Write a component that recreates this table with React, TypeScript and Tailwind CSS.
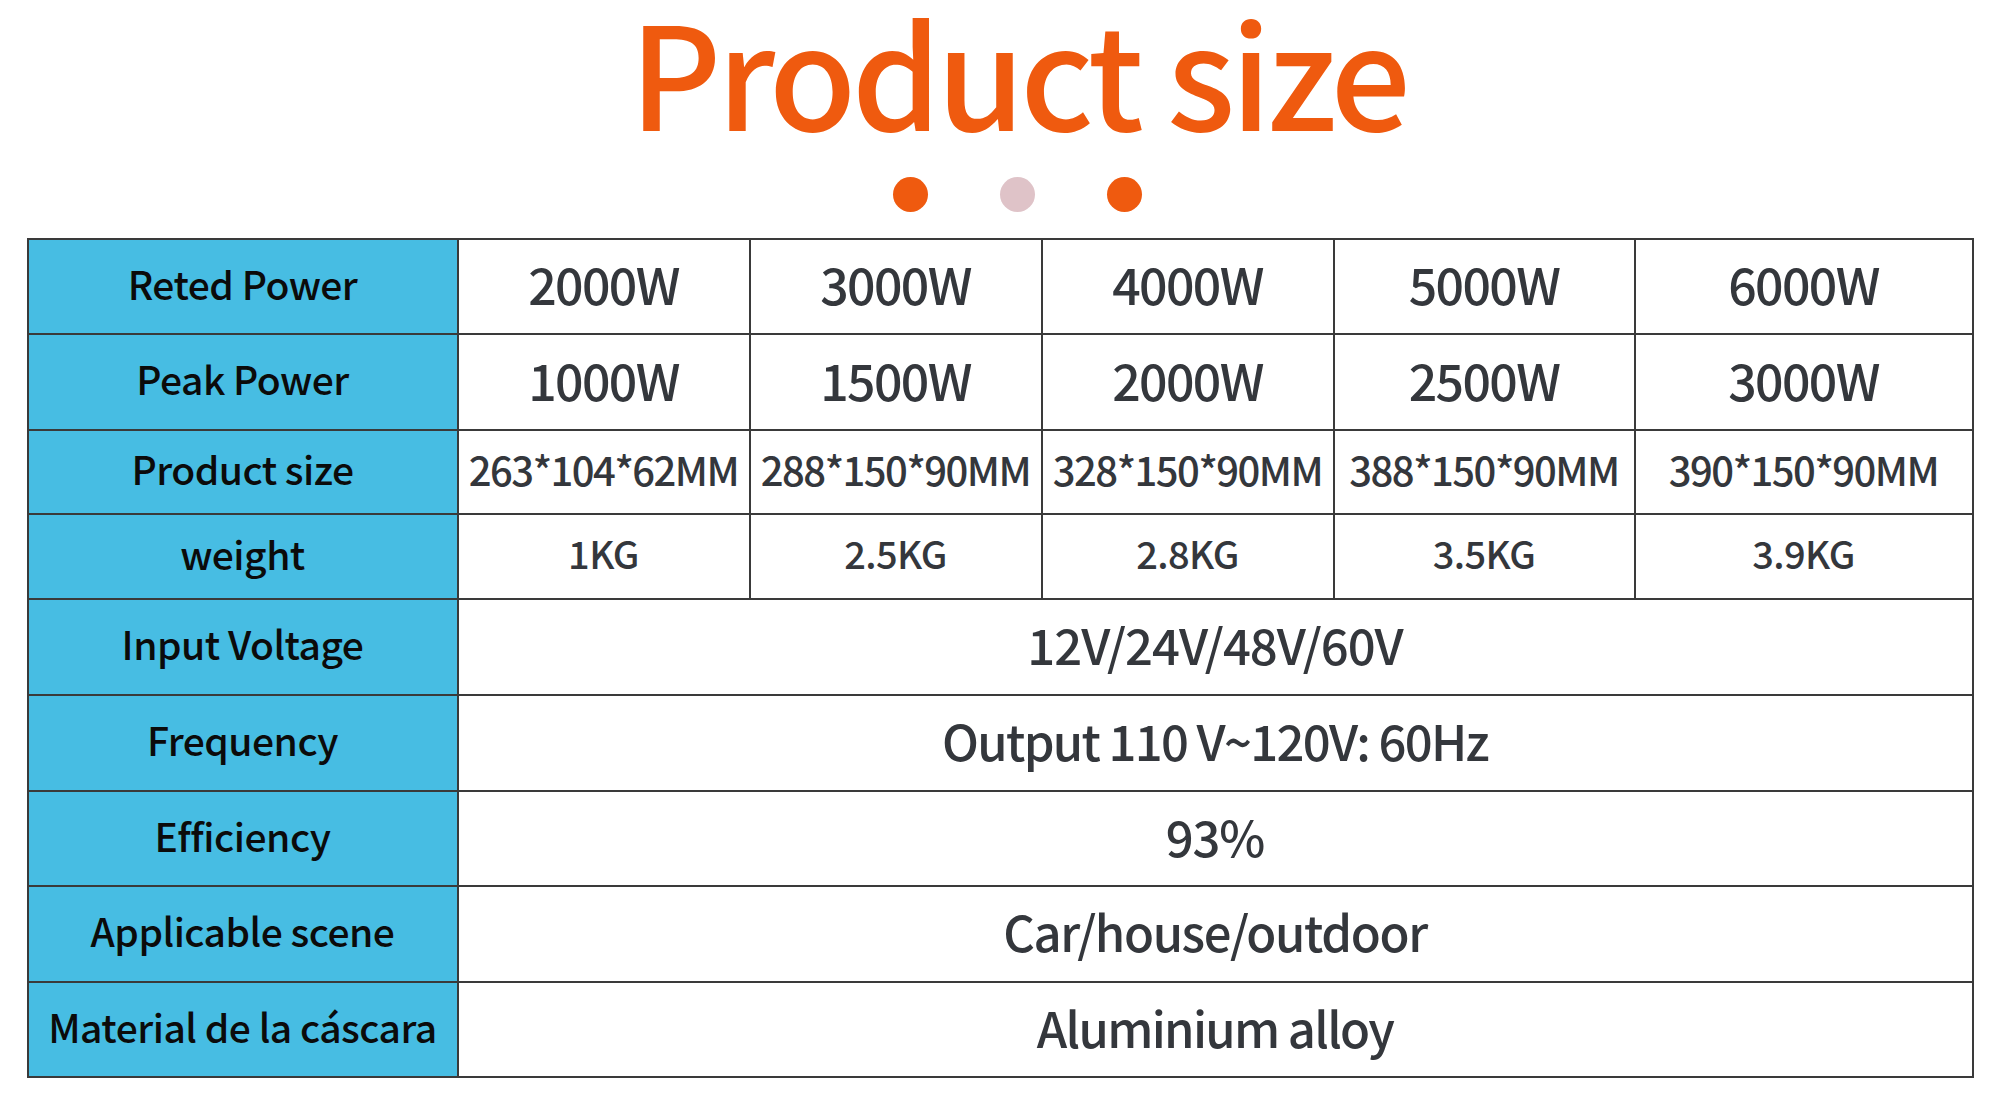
import React from "react";

const FONT = '"Noto Sans CJK SC", "Noto Sans", sans-serif';

type Row = {
  label: string;
  h: string;
  cls: string;
  values: string[] | string;
};

const rows: Row[] = [
  { label: "Reted Power", h: "h-[95px]", cls: "text-[50px] tracking-[-1.6px]", values: ["2000W", "3000W", "4000W", "5000W", "6000W"] },
  { label: "Peak Power", h: "h-[96px]", cls: "text-[50px] tracking-[-1.6px]", values: ["1000W", "1500W", "2000W", "2500W", "3000W"] },
  { label: "Product size", h: "h-[84px]", cls: "text-[40px] tracking-[-1.5px]", values: ["263*104*62MM", "288*150*90MM", "328*150*90MM", "388*150*90MM", "390*150*90MM"] },
  { label: "weight", h: "h-[85px]", cls: "text-[38px] tracking-[-0.6px]", values: ["1KG", "2.5KG", "2.8KG", "3.5KG", "3.9KG"] },
  { label: "Input Voltage", h: "h-[96px]", cls: "text-[49px] tracking-[-1px]", values: "12V/24V/48V/60V" },
  { label: "Frequency", h: "h-[96px]", cls: "text-[49px] tracking-[-1.7px]", values: "Output 110 V~120V: 60Hz" },
  { label: "Efficiency", h: "h-[95px]", cls: "text-[49px] tracking-[-1.2px]", values: "93%" },
  { label: "Applicable scene", h: "h-[96px]", cls: "text-[49px] tracking-[-1.4px]", values: "Car/house/outdoor" },
  { label: "Material de la cáscara", h: "h-[95px]", cls: "text-[49px] tracking-[-1.7px]", values: "Aluminium alloy" },
];

const cellBase = "border-2 border-[#3a3a3a] text-center align-middle font-medium text-[#34373c] leading-none p-0 pb-[7px] whitespace-nowrap";

export default function App() {
  return (
    <div
      className="w-[2000px] h-[1095px] bg-white flex flex-col items-center overflow-hidden"
      style={{ fontFamily: FONT }}
    >
      <div className="flex flex-col items-center pl-[36px]">
        <h1 className="text-[142px] leading-[138px] font-medium text-[#ef5a0f] tracking-[-4.5px] whitespace-nowrap">
          Product size
        </h1>
        <div className="flex gap-[72px] mt-[39px]">
          <span className="block w-[35px] h-[35px] rounded-full bg-[#ef5a0f]" />
          <span className="block w-[35px] h-[35px] rounded-full bg-[#dfc3c8]" />
          <span className="block w-[35px] h-[35px] rounded-full bg-[#ef5a0f]" />
        </div>
      </div>
      <table className="mt-[26px] w-[1945px] table-fixed border-collapse border-2 border-[#3a3a3a]">
        <colgroup>
          <col className="w-[430px]" />
          <col className="w-[292px]" />
          <col className="w-[292px]" />
          <col className="w-[292px]" />
          <col className="w-[301px]" />
          <col className="w-[338px]" />
        </colgroup>
        <tbody>
          {rows.map((r) => (
            <tr key={r.label} className={r.h}>
              <td className="bg-[#47bde3] border-2 border-[#3a3a3a] text-center align-middle text-[39px] tracking-[-0.5px] font-medium text-[#0b0b0b] leading-none p-0 pb-[7px] whitespace-nowrap">
                {r.label}
              </td>
              {Array.isArray(r.values) ? (
                r.values.map((v, i) => (
                  <td key={i} className={`${cellBase} ${r.cls}`}>
                    {v}
                  </td>
                ))
              ) : (
                <td colSpan={5} className={`${cellBase} ${r.cls}`}>
                  {r.values}
                </td>
              )}
            </tr>
          ))}
        </tbody>
      </table>
    </div>
  );
}
